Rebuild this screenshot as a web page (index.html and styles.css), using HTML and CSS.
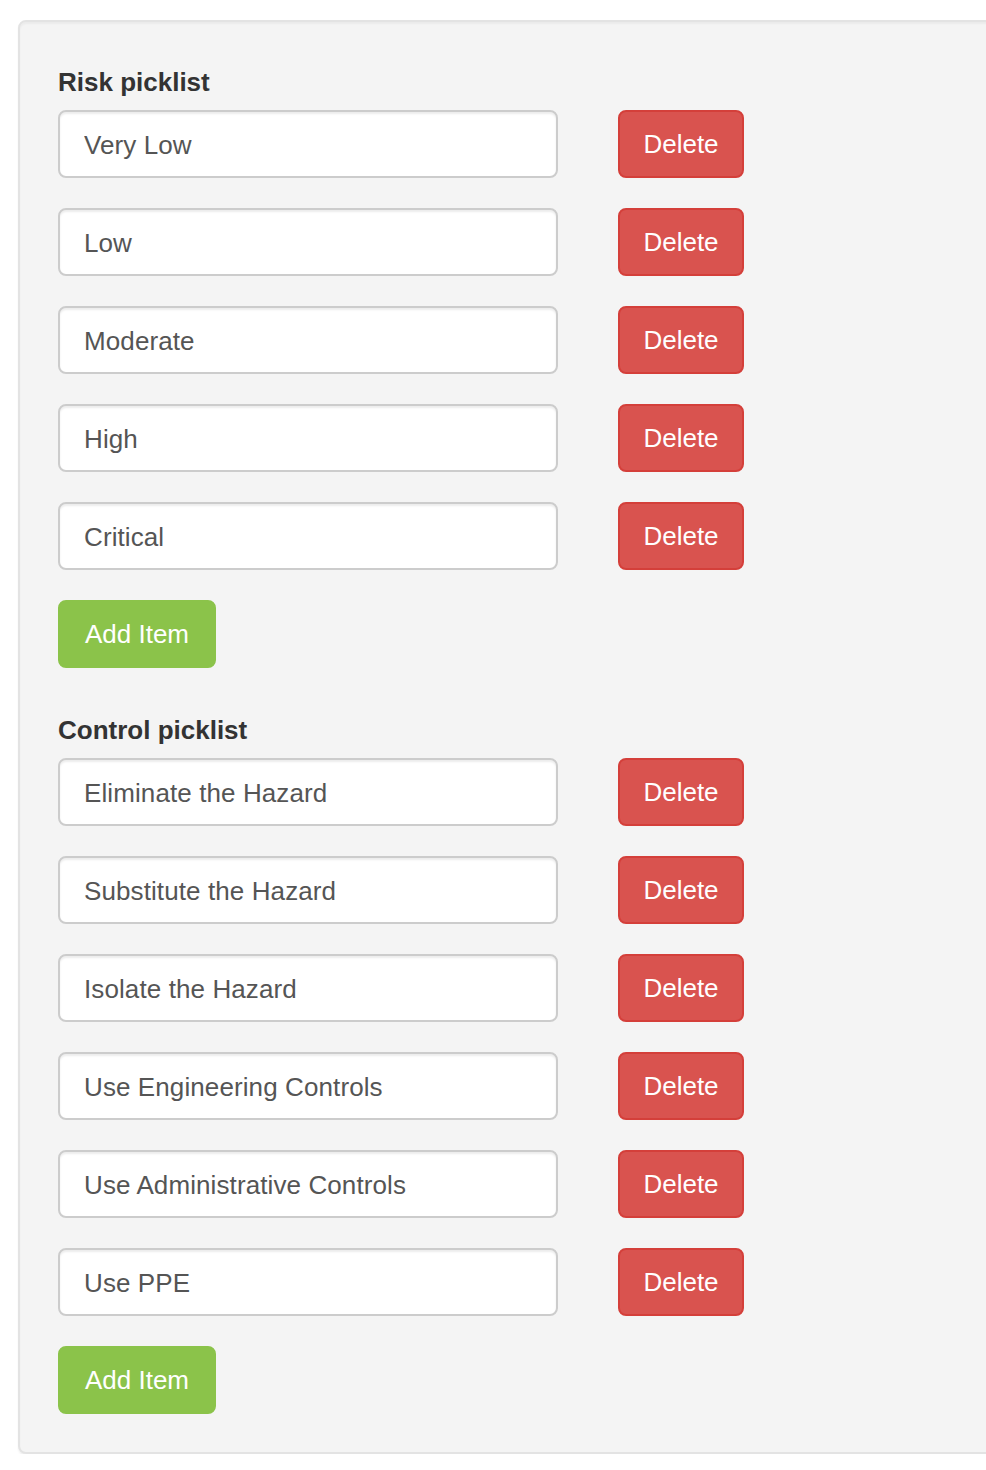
FILE: index.html
```html
<!DOCTYPE html>
<html lang="en">
<head>
<meta charset="UTF-8">
<title>Picklists</title>
<link rel="stylesheet" href="styles.css">
</head>
<body>

<div class="well">
  <!-- risk -->
  <div class="picklist">
    <label class="pl-title">Risk picklist</label>
    <div class="pl-row"><input class="pl-input" value="Very Low"><button class="btn btn-del">Delete</button></div>
    <div class="pl-row"><input class="pl-input" value="Low"><button class="btn btn-del">Delete</button></div>
    <div class="pl-row"><input class="pl-input" value="Moderate"><button class="btn btn-del">Delete</button></div>
    <div class="pl-row"><input class="pl-input" value="High"><button class="btn btn-del">Delete</button></div>
    <div class="pl-row"><input class="pl-input" value="Critical"><button class="btn btn-del">Delete</button></div>
    <button class="btn btn-add">Add Item</button>
  </div>

  <!-- control -->
  <div class="picklist">
    <label class="pl-title">Control picklist</label>
    <div class="pl-row"><input class="pl-input" value="Eliminate the Hazard"><button class="btn btn-del">Delete</button></div>
    <div class="pl-row"><input class="pl-input" value="Substitute the Hazard"><button class="btn btn-del">Delete</button></div>
    <div class="pl-row"><input class="pl-input" value="Isolate the Hazard"><button class="btn btn-del">Delete</button></div>
    <div class="pl-row"><input class="pl-input" value="Use Engineering Controls"><button class="btn btn-del">Delete</button></div>
    <div class="pl-row"><input class="pl-input" value="Use Administrative Controls"><button class="btn btn-del">Delete</button></div>
    <div class="pl-row"><input class="pl-input" value="Use PPE"><button class="btn btn-del">Delete</button></div>
    <button class="btn btn-add">Add Item</button>
  </div>
</div>

</body>
</html>
```

FILE: styles.css
```css
*{margin:0;padding:0;box-sizing:border-box;font-family:"Helvetica Neue","Liberation Sans",Arial,sans-serif}
html,body{background:#fff;overflow:hidden}
body{padding:20px 0 0 18px;color:#333}

.well{width:1010px;background:#f4f4f4;border:2px solid #e3e3e3;border-radius:8px;padding:38px 38px 38px;box-shadow:inset 0 2px 2px rgba(0,0,0,.04),0 2px 2px rgba(0,0,0,.06)}
.picklist{display:flex;flex-direction:column;align-items:flex-start}
.picklist + .picklist{margin-top:40px}
.pl-title{display:block;font-size:26px;line-height:40px;padding-top:2px;height:40px;font-weight:700;color:#333;margin-bottom:10px}
.pl-row{display:flex;align-items:center;gap:60px;margin-bottom:30px}
.pl-input{width:500px;height:68px;border:2px solid #ccc;border-radius:8px;background:#fff;font-size:26px;color:#555;padding:2px 24px 0;letter-spacing:.1px;box-shadow:inset 0 2px 2px rgba(0,0,0,.075);outline:none}

.btn{height:68px;border:2px solid transparent;border-radius:8px;font-size:26px;color:#fff;padding:0 24px;cursor:pointer;line-height:1}
.btn-del{width:126px;padding:0;background:#d9534f;border-color:#d43f3a}
.btn-add{width:158px;padding:0;background:#8bc34a;border-color:#8bc34a}
.btn:active{filter:brightness(95%)}
```
